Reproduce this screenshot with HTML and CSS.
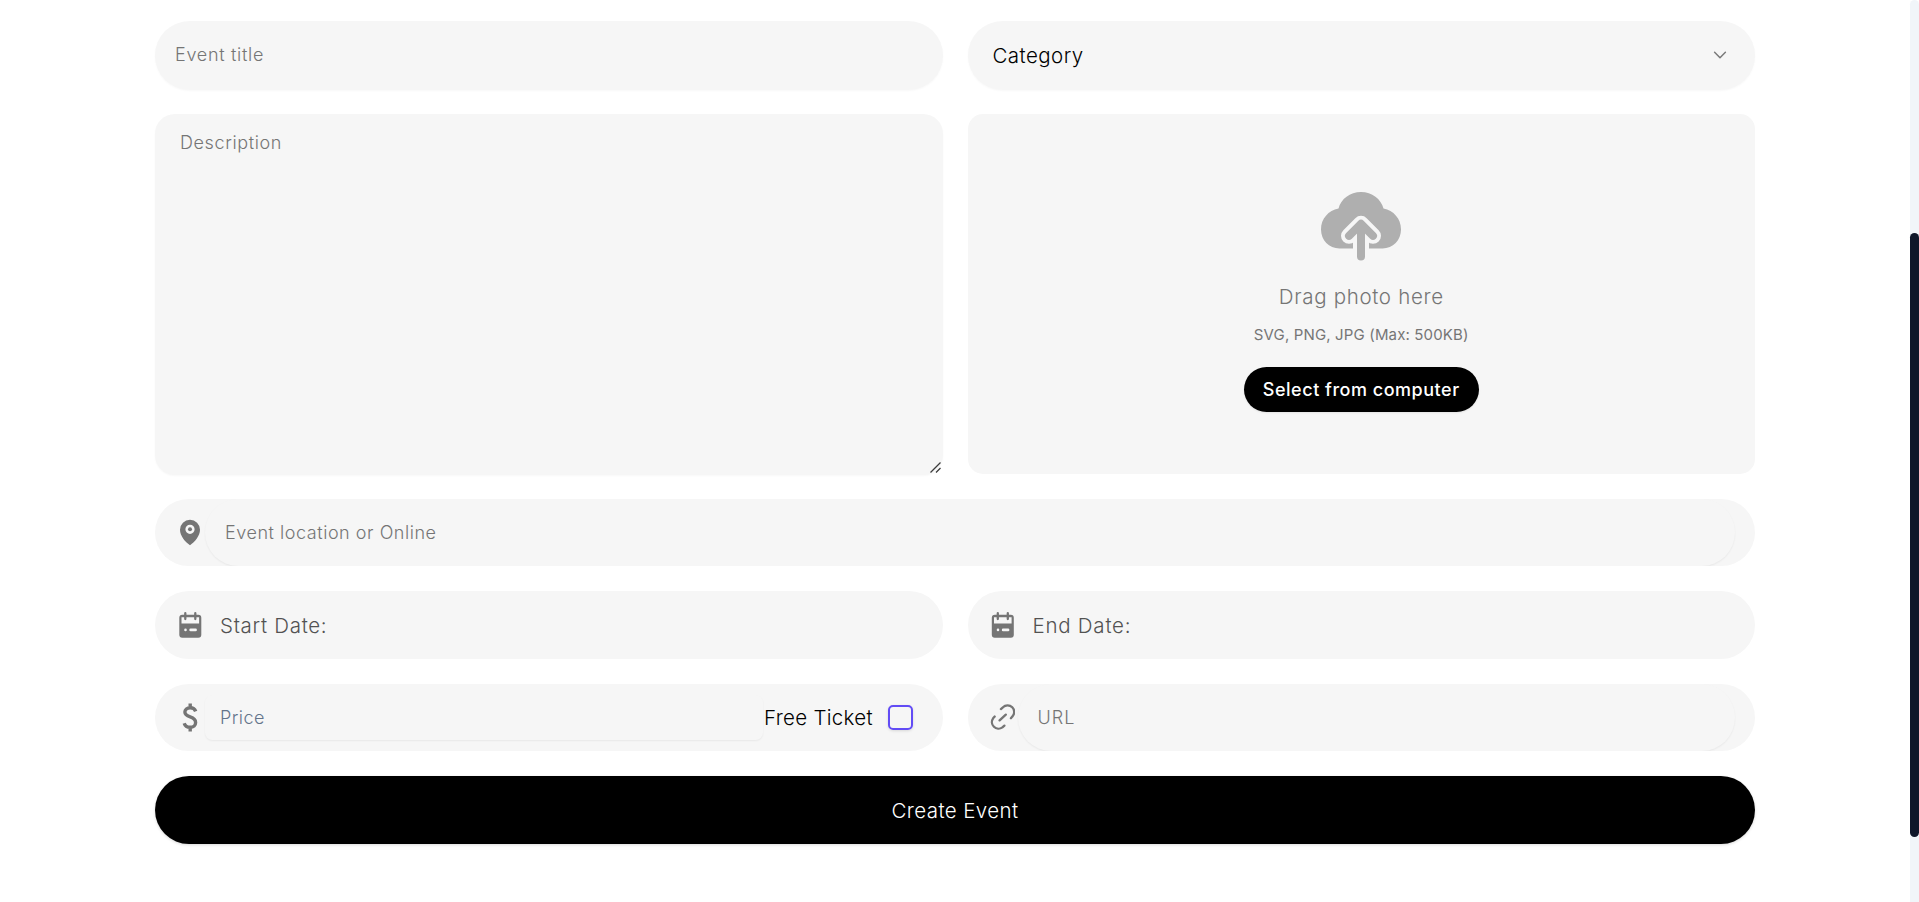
FILE: index.html
```html
<!DOCTYPE html>
<html lang="en">
<head>
<meta charset="utf-8">
<title>Create Event</title>
<link rel="stylesheet" href="styles.css">
</head>
<body>
<form class="form">
  <div class="pill raised title"><span class="ph t-title">Event title</span></div>
  <div class="pill raised select">
    <span class="t-category">Category</span>
    <svg class="chevron" width="20" height="20" viewBox="0 0 20 20"><path d="M4.600 7.300l5.400 5.400 5.400-5.400" fill="none" stroke="#7a7a7a" stroke-width="1.500" stroke-linecap="round" stroke-linejoin="round"/></svg>
  </div>

  <div class="area raised">
    <span class="ph t-desc">Description</span>
    <svg class="grip" width="11" height="11" viewBox="0 0 11 11"><path d="M.5 10.500l10-10M6 10.500L10.500 6" stroke="#3c3c3c" stroke-width="1.300"/></svg>
  </div>
  <div class="drop">
    <svg class="cloud" width="80" height="69" viewBox="0 0 80 69">
      <path fill="#afafaf" d="M18.500 56.500C8 56.500 0 48 0 37.500C0 26.500 7.500 18.500 17.500 16.500C20 7 29 0 40 0C51 0 60 7 62.500 16.500C72.500 18.500 80 26.500 80 37.500C80 48 72 56.500 61.500 56.500z"/>
      <path d="M40 70V32M28 43.800L40 31.800L52 43.800" fill="none" stroke="#f6f6f6" stroke-width="16" stroke-linecap="round" stroke-linejoin="round"/>
      <path d="M40 64.500V32M28 43.800L40 31.800L52 43.800" fill="none" stroke="#afafaf" stroke-width="8" stroke-linecap="round" stroke-linejoin="round"/>
    </svg>
    <span class="t-drag">Drag photo here</span>
    <span class="t-types">SVG, PNG, JPG (Max: 500KB)</span>
    <button type="button" class="pick"><span class="t-pick">Select from computer</span></button>
  </div>

  <div class="pill wide row-short">
    <svg class="icon" width="25" height="30" viewBox="0 0 25 30"><path fill="#757575" fill-rule="evenodd" d="M12 1.700A10 10 0 0 0 2 11.700C2 17.700 7 23.700 12 27.200C17 23.700 22 17.700 22 11.700A10 10 0 0 0 12 1.700zM12 6.700a4.600 4.600 0 1 1 0 9.200a4.600 4.600 0 0 1 0-9.200z"/><circle cx="12" cy="11.300" r="2" fill="#757575"/></svg>
    <div class="inner round"><span class="ph t-loc">Event location or Online</span></div>
  </div>

  <div class="pill row-date">
    <svg class="icon" width="25" height="30" viewBox="0 0 25 30"><path fill="#757575" fill-rule="evenodd" d="M4.300 4.800h16a3 3 0 0 1 3 3v16.900a3 3 0 0 1-3 3h-16a3 3 0 0 1-3-3V7.800a3 3 0 0 1 3-3zM3.500 7.200v6.300h17.600V7.200zM7.500 18.600a1.200 1.200 0 1 0 0 2.600a1.200 1.200 0 0 0 0-2.600zM12.600 18.600a1.300 1.300 0 0 0 0 2.600h5a1.300 1.300 0 0 0 0-2.600z"/><path d="M7.300 3.200v5.800M17.300 3.200v5.800" stroke="#757575" stroke-width="2.300" stroke-linecap="round"/></svg>
    <span class="label t-start">Start Date:</span>
  </div>
  <div class="pill row-date">
    <svg class="icon" width="25" height="30" viewBox="0 0 25 30"><path fill="#757575" fill-rule="evenodd" d="M4.800 4.800h16a3 3 0 0 1 3 3v16.900a3 3 0 0 1-3 3h-16a3 3 0 0 1-3-3V7.800a3 3 0 0 1 3-3zM4 7.200v6.300h17.600V7.200zM8 18.600a1.200 1.200 0 1 0 0 2.600a1.200 1.200 0 0 0 0-2.600zM13.100 18.600a1.300 1.300 0 0 0 0 2.600h5a1.300 1.300 0 0 0 0-2.600z"/><path d="M7.800 3.200v5.800M17.800 3.200v5.800" stroke="#757575" stroke-width="2.300" stroke-linecap="round"/></svg>
    <span class="label t-end">End Date:</span>
  </div>

  <div class="pill row-short">
    <svg class="icon" width="25" height="30" viewBox="0 0 25 30"><path d="M12.200 .4v4M12.200 24.600v4M17.700 8.400C16.900 6 14.900 4.800 12.200 4.800C9 4.800 6.900 6.600 6.900 9.100C6.900 11.800 9 12.900 12.200 13.900C15.500 15 17.600 16.200 17.600 19.400C17.600 22.300 15.400 24.300 12.200 24.300C9.200 24.300 7 22.800 6.200 20.200" fill="none" stroke="#757575" stroke-width="3.400"/></svg>
    <div class="inner price"><span class="t-price">Price</span></div>
    <span class="free"><span class="t-free">Free Ticket</span></span>
    <span class="check"></span>
  </div>
  <div class="pill row-short">
    <svg class="icon" width="25" height="30" viewBox="0 0 25 30"><path d="M9.600 17.400L15.800 11.600M10.900 6.100L12.900 4.300A6.600 6.600 0 0 1 22.300 13.600L20.900 15.200M14.400 22.600L12.400 24.400A6.600 6.600 0 0 1 3.100 15.300L4.700 13.500" fill="none" stroke="#757575" stroke-width="2.300" stroke-linecap="round" stroke-linejoin="round"/></svg>
    <div class="inner round"><span class="ph t-url">URL</span></div>
  </div>

  <button type="button" class="submit wide"><span class="t-create">Create Event</span></button>
</form>
<div class="track"><div class="thumb"></div></div>
</body>
</html>
```
FILE: styles.css
```css
* { box-sizing: border-box; }
body {
  margin: 0;
  height: 902px;
  overflow: hidden;
  display: flex;
  background: #fff;
  color: #000;
  font-family: Inter, "Liberation Sans", sans-serif;
  font-weight: 300;
  font-size: 20.5px;
  white-space: nowrap;
}
.form {
  width: 1600px;
  margin: 21px 155px 0;
  display: grid;
  grid-template-columns: 1fr 1fr;
  grid-template-rows: 69px 361px 68px 69px 68px 68px;
  gap: 24px 25px;
  align-content: start;
}
.wide { grid-column: 1 / -1; }
.pill {
  display: flex;
  align-items: center;
  background: #f6f6f6;
  border-radius: 35px;
  overflow: hidden;
}
.row-short { height: 67px; }
.row-date { height: 68px; }
.raised { box-shadow: 0 1px 2px rgba(0, 0, 0, .03); }
.title { padding: 0 20px 2px; }
.select { padding: 0 25px 1px; justify-content: space-between; }
.area {
  position: relative;
  background: #f6f6f6;
  border-radius: 20px;
  padding: 15px 25px;
}
.grip { position: absolute; right: 2px; bottom: 2px; }
.drop {
  height: 360px;
  background: #f6f6f6;
  border-radius: 15px;
  display: flex;
  flex-direction: column;
  align-items: center;
  padding-top: 78px;
  color: #757575;
}
.cloud { display: block; }
.ph { color: #757575; font-size: 18px; }
.icon { margin-left: 22.5px; flex: none; }
.inner {
  display: flex;
  align-items: center;
  flex: 1;
  margin: 0 20px 0 2.5px;
  background: #f6f6f6;
  box-shadow: 0 1px 2px rgba(0, 0, 0, .06);
}
.round { height: 67px; border-radius: 34px; padding-left: 20px; }
.price {
  height: 45px;
  flex: none;
  width: 558px;
  margin-right: 0;
  border-radius: 7.5px;
  padding-left: 15px;
  color: #64748b;
  font-size: 18px;
}
.label { margin-left: 17.5px; color: #525252; }
.check {
  width: 25px;
  height: 25px;
  margin-left: 16px;
  border: 2px solid #624cf5;
  border-radius: 5px;
  box-shadow: 0 1px 3px rgba(0, 0, 0, .12);
}
.free { width: 108px; margin-left: 1px; padding-bottom: 1px; }
.pick, .submit {
  border: 0;
  padding: 0;
  font-family: inherit;
  background: #000;
  color: #fff;
  display: flex;
  align-items: center;
  justify-content: center;
}
.pick {
  width: 235px;
  height: 45px;
  margin-top: 22px;
  border-radius: 23px;
  font-size: 18px;
  font-weight: 450;
  box-shadow: 0 1px 2px rgba(0, 0, 0, .08);
}
.submit {
  border-radius: 34px;
  font-size: 20.5px;
  font-weight: 350;
  box-shadow: 0 1px 3px rgba(0, 0, 0, .15);
}
.t-title { letter-spacing: .7px; }
.t-desc { letter-spacing: .62px; }
.t-category { font-weight: 350; letter-spacing: .45px; }
.t-drag { margin-top: 20.5px; line-height: 30px; letter-spacing: .68px; }
.t-types { margin-top: 12px; line-height: 21px; font-size: 15px; font-weight: 400; letter-spacing: .15px; }
.t-pick { letter-spacing: .52px; }
.t-loc { letter-spacing: .54px; }
.t-start { letter-spacing: .7px; }
.t-end { letter-spacing: .75px; }
.t-price { letter-spacing: .45px; }
.t-free { letter-spacing: .3px; }
.t-url { letter-spacing: 1px; }
.t-create { letter-spacing: .4px; }
.track { width: 9px; height: 902px; background: #f1f5f9; padding-top: 233px; border-radius: 5px 5px 0 0; flex: none; }
.thumb { height: 604px; background: #0f172a; border-radius: 5px; }
```
